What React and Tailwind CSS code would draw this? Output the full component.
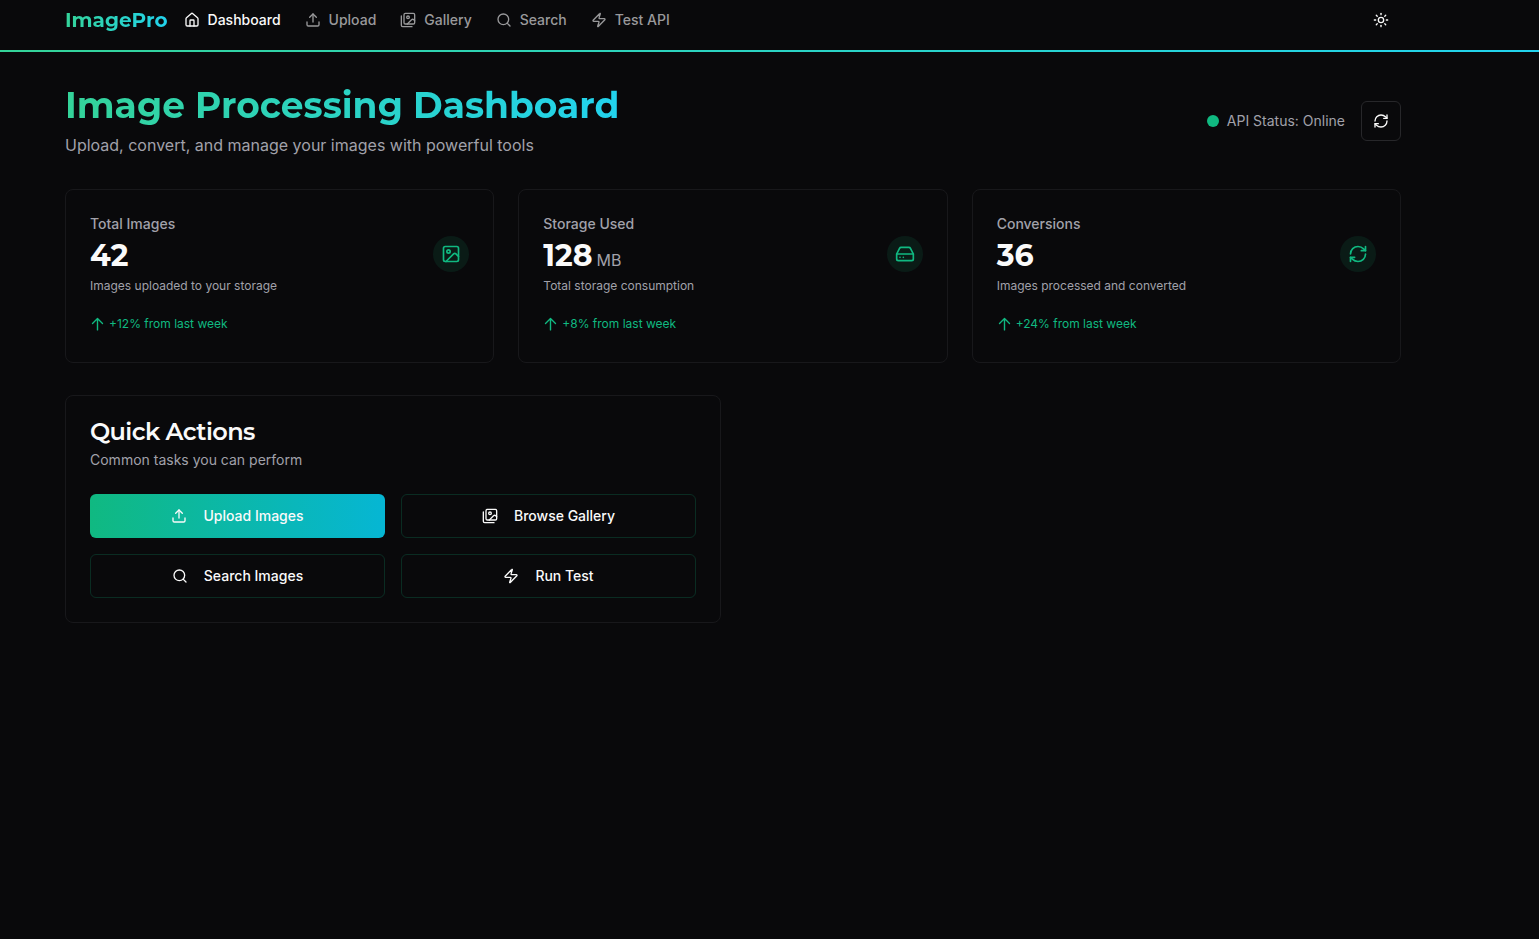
import {
  HardDrive,
  House,
  Image as ImageIcon,
  RefreshCw,
  Search,
  Sun,
  Upload,
  Zap,
} from "lucide-react";

const DISPLAY = "font-['Montserrat','Inter',sans-serif]";

function GalleryIcon({ className }) {
  return (
    <svg
      viewBox="0 0 24 24"
      fill="none"
      stroke="currentColor"
      strokeWidth="2"
      strokeLinecap="round"
      strokeLinejoin="round"
      className={className}
      aria-hidden="true"
    >
      <path d="M18 22H4a2 2 0 0 1-2-2V6" />
      <path d="m22 13-1.296-1.296a2.41 2.41 0 0 0-3.408 0L11 18" />
      <circle cx="12" cy="8" r="2" />
      <rect width="16" height="16" x="6" y="2" rx="2" />
    </svg>
  );
}

function TrendIcon({ className }) {
  return (
    <svg
      viewBox="0 0 15 15"
      fill="none"
      stroke="currentColor"
      strokeWidth="1.4"
      strokeLinecap="round"
      strokeLinejoin="round"
      className={className}
      aria-hidden="true"
    >
      <path d="M2.5 6.4l5-5 5 5M7.5 1.4v11.5" />
    </svg>
  );
}

const NAV = [
  { label: "Dashboard", icon: House, active: true },
  { label: "Upload", icon: Upload },
  { label: "Gallery", icon: GalleryIcon },
  { label: "Search", icon: Search },
  { label: "Test API", icon: Zap },
];

const STATS = [
  {
    label: "Total Images",
    value: "42",
    note: "Images uploaded to your storage",
    trend: "+12% from last week",
    icon: ImageIcon,
  },
  {
    label: "Storage Used",
    value: "128",
    unit: "MB",
    note: "Total storage consumption",
    trend: "+8% from last week",
    icon: HardDrive,
  },
  {
    label: "Conversions",
    value: "36",
    note: "Images processed and converted",
    trend: "+24% from last week",
    icon: RefreshCw,
  },
];

const ACTIONS = [
  { label: "Upload Images", icon: Upload, primary: true },
  { label: "Browse Gallery", icon: GalleryIcon },
  { label: "Search Images", icon: Search },
  { label: "Run Test", icon: Zap },
];

function Header() {
  return (
    <header>
      <div className="pr-[73px]">
        <div className="mx-auto flex h-[50px] max-w-[1400px] items-center px-8 pb-2.5">
          <a
            href="#"
            className={`${DISPLAY} mr-4 bg-linear-to-r/srgb from-[#34d399] to-[#22d3ee] bg-clip-text text-xl font-bold text-transparent`}
          >
            ImagePro
          </a>
          <nav className="flex items-center gap-6">
            {NAV.map(({ label, icon: Icon, active }) => (
              <a
                key={label}
                href="#"
                className={`flex items-center gap-2 text-sm font-medium ${
                  active ? "text-[#fafafa]" : "text-[#99999b]"
                }`}
              >
                <Icon className="size-4" />
                {label}
              </a>
            ))}
          </nav>
          <button
            type="button"
            aria-label="Toggle theme"
            className="ml-auto flex size-10 items-center justify-center rounded-md"
          >
            <Sun className="size-4" />
          </button>
        </div>
      </div>
      <div className="h-0.5 bg-linear-to-r/srgb from-[#34d399] to-[#22d3ee]" />
    </header>
  );
}

function StatCard({ label, value, unit, note, trend, icon: Icon }) {
  return (
    <article className="rounded-lg border border-[#18181b] p-6">
      <div className="flex items-center justify-between">
        <div>
          <h2 className="text-sm font-medium text-[#a1a1aa]">{label}</h2>
          <p className="mt-1 flex items-baseline gap-1">
            <span className={`${DISPLAY} text-3xl font-bold`}>{value}</span>
            {unit && <span className="text-base text-[#a1a1aa]">{unit}</span>}
          </p>
          <p className="mt-1 text-xs text-[#a1a1aa]">{note}</p>
        </div>
        <div className="flex size-9 items-center justify-center rounded-full bg-[#10b981]/10 text-[#10b981]">
          <Icon className="size-5" />
        </div>
      </div>
      <p className="mt-4 flex h-7 items-center gap-1 text-xs text-[#10b981]">
        <TrendIcon className="size-[15px]" />
        {trend}
      </p>
    </article>
  );
}

export default function App() {
  return (
    <div className="min-h-screen bg-[#09090b] font-['Inter',sans-serif] text-[#fafafa]">
      <Header />
      <div className="pr-[73px]">
        <main className="mx-auto max-w-[1400px] px-8 pt-[33px] pb-8">
          <div className="mb-8 flex items-center justify-between">
            <div>
              <h1
                className={`${DISPLAY} w-fit bg-linear-to-r/srgb from-[#34d399] to-[#22d3ee] bg-clip-text text-4xl font-bold text-transparent`}
              >
                Image Processing Dashboard
              </h1>
              <p className="mt-2 text-base text-[#a1a1aa]">
                Upload, convert, and manage your images with powerful tools
              </p>
            </div>
            <div className="flex items-center gap-4">
              <div className="flex items-center gap-2 text-sm text-[#a1a1aa]">
                <span className="size-3 rounded-full bg-[#10b981]" />
                API Status: Online
              </div>
              <button
                type="button"
                aria-label="Refresh status"
                className="flex size-10 items-center justify-center rounded-md border border-[#27272a]"
              >
                <RefreshCw className="size-4" />
              </button>
            </div>
          </div>

          <section className="mb-8 grid grid-cols-3 gap-6">
            {STATS.map((stat) => (
              <StatCard key={stat.label} {...stat} />
            ))}
          </section>

          <div className="grid grid-cols-2 gap-6">
            <section className="rounded-lg border border-[#18181b] p-6">
              <h2
                className={`${DISPLAY} text-2xl leading-6 font-semibold tracking-tight`}
              >
                Quick Actions
              </h2>
              <p className="mt-1.5 text-sm text-[#a1a1aa]">
                Common tasks you can perform
              </p>
              <div className="mt-6 grid grid-cols-2 gap-4">
                {ACTIONS.map(({ label, icon: Icon, primary }) => (
                  <button
                    key={label}
                    type="button"
                    className={`flex h-11 items-center justify-center gap-4 rounded-md text-sm font-medium ${
                      primary
                        ? "bg-linear-to-r/srgb from-[#10b981] to-[#06b6d4]"
                        : "border border-[#10b981]/20"
                    }`}
                  >
                    <Icon className="size-4" />
                    {label}
                  </button>
                ))}
              </div>
            </section>
          </div>
        </main>
      </div>
    </div>
  );
}
